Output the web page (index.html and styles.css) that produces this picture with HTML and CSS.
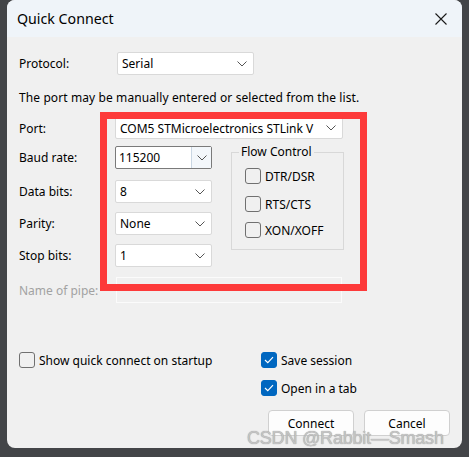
FILE: index.html
```html
<!DOCTYPE html>
<html>
<head>
<meta charset="utf-8">
<link rel="stylesheet" href="styles.css">
</head>
<body>
<div class="dialog">
  <div class="titlebar">
    <span class="title">Quick Connect</span>
    <svg class="close" width="12" height="12" viewBox="0 0 12 12"><path d="M0.5 0.5 L11.5 11.5 M11.5 0.5 L0.5 11.5" stroke="#1a1a1a" stroke-width="1.1" fill="none"/></svg>
  </div>
  <div class="content">
    <div class="row r-protocol">
      <span class="label lbl-protocol">Protocol:</span>
      <div class="select w-protocol"><span>Serial</span><svg class="chev" width="10" height="6" viewBox="0 0 10 6"><path d="M0.5 0.5 L5 5 L9.5 0.5" stroke="#555" fill="none"/></svg></div>
    </div>
    <div class="note">The port may be manually entered or selected from the list.</div>
    <div class="row r-port">
      <span class="label">Port:</span>
      <div class="select w-port"><span>COM5 STMicroelectronics STLink V</span><svg class="chev" width="10" height="6" viewBox="0 0 10 6"><path d="M0.5 0.5 L5 5 L9.5 0.5" stroke="#555" fill="none"/></svg></div>
    </div>
    <div class="mid">
      <div class="leftcol">
        <div class="row r-baud">
          <span class="label">Baud rate:</span>
          <div class="combo"><span class="ctext">115200</span><span class="cbtn"><svg width="10" height="6" viewBox="0 0 10 6"><path d="M0.5 0.5 L5 5 L9.5 0.5" stroke="#555" fill="none"/></svg></span></div>
        </div>
        <div class="row r-data">
          <span class="label">Data bits:</span>
          <div class="select w-small"><span>8</span><svg class="chev" width="10" height="6" viewBox="0 0 10 6"><path d="M0.5 0.5 L5 5 L9.5 0.5" stroke="#555" fill="none"/></svg></div>
        </div>
        <div class="row r-parity">
          <span class="label">Parity:</span>
          <div class="select w-small"><span>None</span><svg class="chev" width="10" height="6" viewBox="0 0 10 6"><path d="M0.5 0.5 L5 5 L9.5 0.5" stroke="#555" fill="none"/></svg></div>
        </div>
        <div class="row r-stop">
          <span class="label">Stop bits:</span>
          <div class="select w-small"><span>1</span><svg class="chev" width="10" height="6" viewBox="0 0 10 6"><path d="M0.5 0.5 L5 5 L9.5 0.5" stroke="#555" fill="none"/></svg></div>
        </div>
      </div>
      <div class="group">
        <span class="gtitle">Flow Control</span>
        <div class="chk c1"><span class="box"></span><span>DTR/DSR</span></div>
        <div class="chk c2"><span class="box"></span><span>RTS/CTS</span></div>
        <div class="chk c3"><span class="box"></span><span>XON/XOFF</span></div>
      </div>
    </div>
    <div class="row r-pipe">
      <span class="label disabled">Name of pipe:</span>
      <div class="pipebox"></div>
    </div>
    <div class="bottom">
      <div class="brow">
        <div class="chk left"><span class="box"></span><span>Show quick connect on startup</span></div>
        <div class="chk"><span class="box on"><svg width="10" height="8" viewBox="0 0 10 8"><path d="M1 4 L3.8 6.6 L9 1.2" stroke="#fff" stroke-width="1.2" fill="none"/></svg></span><span>Save session</span></div>
      </div>
      <div class="brow second">
        <div class="chk"><span class="box on"><svg width="10" height="8" viewBox="0 0 10 8"><path d="M1 4 L3.8 6.6 L9 1.2" stroke="#fff" stroke-width="1.2" fill="none"/></svg></span><span>Open in a tab</span></div>
      </div>
      <div class="buttons">
        <div class="btn">Connect</div>
        <div class="btn">Cancel</div>
      </div>
    </div>
  </div>
  <div class="redbox"></div>
  <div class="watermark">CSDN @Rabbit—Smash</div>
</div>
</body>
</html>
```
FILE: styles.css
```css
html, body {
  margin: 0;
  padding: 0;
  background: #434548;
  width: 469px;
  height: 457px;
  overflow: hidden;
}
body {
  font-family: "Noto Sans", "Open Sans", sans-serif;
  font-size: 12px;
  color: #000;
}
.dialog {
  position: relative;
  margin-left: 7px;
  width: 455px;
  height: 448px;
  background: #f0f0f0;
  border-radius: 8px;
  overflow: hidden;
}
.titlebar {
  height: 37px;
  background: #eff4f9;
  display: flex;
  align-items: center;
  justify-content: space-between;
  padding: 0 15px 0 10px;
}
.title {
  font-size: 14.2px;
  margin-top: -1px;
}
.close {
  margin-top: 1px;
}
.content {
  padding: 15px 0 0 12px;
}
.row {
  display: flex;
  align-items: center;
}
.label {
  width: 96px;
  flex: none;
}
.lbl-protocol { width: 98px; }
.select {
  box-sizing: border-box;
  height: 23px;
  background: #fff;
  border: 1px solid #d9d9d9;
  border-radius: 2px;
  display: flex;
  align-items: center;
  justify-content: space-between;
  padding: 0 6px 0 4px;
}
.w-protocol { width: 137px; }
.w-port { width: 228px; height: 22px; }
.w-small { width: 97px; }
.r-protocol { height: 23px; }
.note {
  margin-top: 15px;
  line-height: 16px;
  letter-spacing: 0.1px;
}
.r-port { margin-top: 11px; }
.mid {
  display: flex;
}
.leftcol {
  width: 212px;
}
.r-baud { margin-top: 7px; }
.r-data { margin-top: 11px; }
.r-parity { margin-top: 9px; }
.r-stop { margin-top: 9px; }
.combo {
  box-sizing: border-box;
  width: 97px;
  height: 23px;
  background: #fff;
  border: 1px solid #7a7a7a;
  border-radius: 2px;
  display: flex;
  align-items: stretch;
}
.ctext {
  flex: 1;
  padding-left: 3px;
  display: flex;
  align-items: center;
}
.cbtn {
  width: 19px;
  background: #f3f7fb;
  border-left: 1px solid #c9d6e3;
  display: flex;
  align-items: center;
  justify-content: center;
}
.group {
  box-sizing: border-box;
  margin-left: 0;
  margin-top: 13px;
  width: 113px;
  height: 98px;
  border: 1px solid #d8d8d8;
  position: relative;
  padding: 15px 0 0 13px;
}
.gtitle {
  position: absolute;
  top: -9px;
  left: 7px;
  background: #f0f0f0;
  padding: 0 2px;
  line-height: 16px;
}
.chk {
  display: flex;
  align-items: center;
  height: 16px;
}
.chk .box {
  box-sizing: border-box;
  width: 16px;
  height: 16px;
  border: 1px solid #707070;
  border-radius: 3px;
  margin-right: 4px;
  flex: none;
  display: flex;
  align-items: center;
  justify-content: center;
}
.chk .box.on {
  background: #0067c0;
  border-color: #0067c0;
}
.group .c2 { margin-top: 12px; }
.group .c3 { margin-top: 10px; }
.r-pipe { margin-top: 10px; }
.disabled {
  color: #a2a2a2;
  width: 97px;
}
.pipebox {
  box-sizing: border-box;
  width: 226px;
  height: 26px;
  border: 1px solid #fbfbfb;
}
.bottom {
  margin-top: 49px;
}
.brow {
  display: flex;
}
.brow .left {
  width: 242px;
  flex: none;
}
.brow.second {
  margin-top: 12px;
  padding-left: 242px;
}
.buttons {
  margin-top: 14px;
  display: flex;
  justify-content: flex-end;
  gap: 10px;
  padding-right: 12px;
}
.btn {
  box-sizing: border-box;
  width: 86px;
  height: 26px;
  background: #fdfdfd;
  border: 1px solid #d0d0d0;
  border-radius: 4px;
  display: flex;
  align-items: center;
  justify-content: center;
}
.redbox {
  position: absolute;
  left: 93px;
  top: 112px;
  width: 253px;
  height: 165px;
  border: 7px solid #fd3a3a;
}
.watermark {
  position: absolute;
  left: 240px;
  top: 428px;
  font-family: "Liberation Sans", sans-serif;
  font-size: 18px;
  color: #c4c4c4;
  text-shadow: 0 0 1px #8a8a8a;
  white-space: nowrap;
  letter-spacing: -0.2px;
}
```
